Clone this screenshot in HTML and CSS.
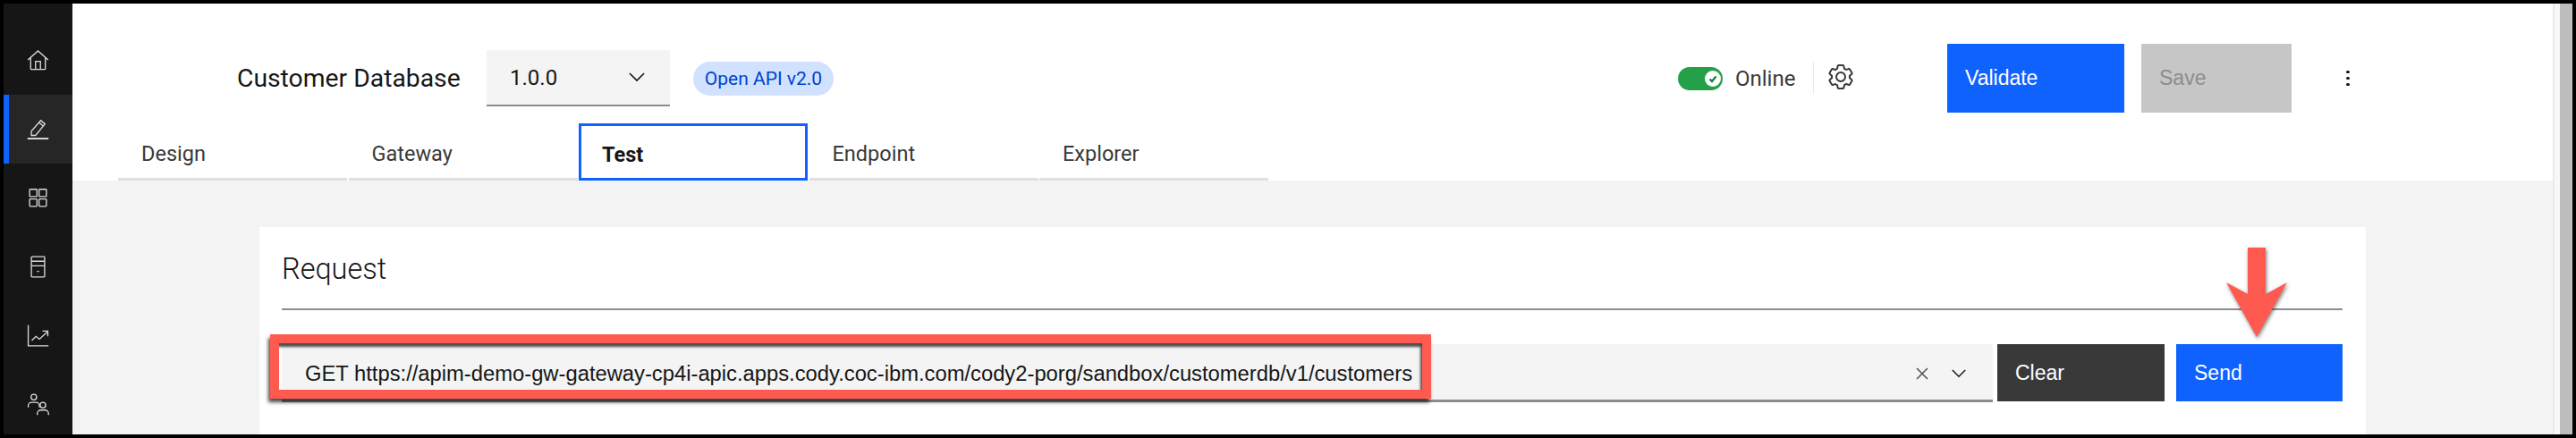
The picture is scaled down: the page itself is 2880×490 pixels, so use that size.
FILE: index.html
```html
<!DOCTYPE html>
<html lang="en">
<head>
  <meta charset="UTF-8" />
  <title>Customer Database</title>
  <link rel="stylesheet" href="styles.css">
</head>
<body>
  <div class="frame">
    <nav class="sidenav">
      <a class="nav-item">
        <svg viewBox="0 0 32 32" class="nav-icon"><path d="M1.500 15.500 16 2.500l14.500 13M5.500 12.500V28a1 1 0 0 0 1 1h19a1 1 0 0 0 1-1V12.500M12.500 29V17.500h7V29"/></svg>
      </a>
      <a class="nav-item active">
        <svg viewBox="0 0 32 32" class="nav-icon"><path d="M1 29.500h30" stroke-width="2.500"/><path d="M6.500 25v-6L20 3.500l6 5L12.500 25zM17.500 6.500l6 5"/></svg>
      </a>
      <a class="nav-item">
        <svg viewBox="0 0 32 32" class="nav-icon"><rect x="4" y="3.500" width="10.500" height="10.500" rx="1"/><rect x="17.500" y="3.500" width="10.500" height="10.500" rx="1"/><rect x="4" y="17.500" width="10.500" height="10.500" rx="1"/><rect x="17.500" y="17.500" width="10.500" height="10.500" rx="1"/></svg>
      </a>
      <a class="nav-item">
        <svg viewBox="0 0 32 32" class="nav-icon"><rect x="6.500" y="1.500" width="19" height="29" rx="1"/><path d="M6.500 8h19M6.500 14.500h19M14.500 22.500h3"/></svg>
      </a>
      <a class="nav-item">
        <svg viewBox="0 0 32 32" class="nav-icon"><path d="M2 1v29.500h29M7 23l6-6 5 4 11-10M22.500 9.500H30V17"/></svg>
      </a>
      <a class="nav-item">
        <svg viewBox="0 0 32 32" class="nav-icon"><circle cx="10" cy="5.500" r="4"/><path d="M2 20v-2a5 5 0 0 1 5-5h6a5 5 0 0 1 5 5v2"/><circle cx="23" cy="17" r="4"/><path d="M15 31v-2a5 5 0 0 1 5-5h6a5 5 0 0 1 5 5v2"/></svg>
      </a>
    </nav>

    <div class="main">
      <header class="page-header">
        <div class="top-row">
          <h1 class="api-title">Customer Database</h1>
          <div class="version-select">
            <span>1.0.0</span>
            <svg viewBox="0 0 20 12" class="chevron"><path d="M1 1l9 9 9-9"/></svg>
          </div>
          <span class="tag">Open API v2.0</span>

          <div class="status">
            <span class="toggle"><span class="knob"><svg viewBox="0 0 12 12"><path d="M2.500 6.500l2.500 2.500 4.500-5.500"/></svg></span></span>
            <span class="status-label">Online</span>
          </div>
          <span class="settings">
            <svg viewBox="0 0 32 32" class="gear">
              <path d="M27,16.760c0-.25,0-.5,0-.76s0-.51,0-.77l1.920-1.680A2,2,0,0,0,29.300,11L26.940,7a2,2,0,0,0-1.730-1,2,2,0,0,0-.64.100l-2.430.82a11.350,11.350,0,0,0-1.310-.75l-.51-2.520a2,2,0,0,0-2-1.610H13.640a2,2,0,0,0-2,1.610l-.51,2.520a11.480,11.480,0,0,0-1.320.75L7.430,6.060A2,2,0,0,0,6.790,6,2,2,0,0,0,5.060,7L2.700,11a2,2,0,0,0,.41,2.510L5,15.240c0,.25,0,.5,0,.76s0,.51,0,.77L3.110,18.450A2,2,0,0,0,2.700,21L5.060,25a2,2,0,0,0,1.730,1,2,2,0,0,0,.64-.1l2.430-.82a11.350,11.350,0,0,0,1.310.75l.51,2.520a2,2,0,0,0,2,1.610h4.720a2,2,0,0,0,2-1.610l.51-2.520a11.480,11.480,0,0,0,1.320-.75l2.420.82a2,2,0,0,0,.64.100,2,2,0,0,0,1.730-1L29.300,21a2,2,0,0,0-.41-2.510ZM25.210,24l-3.430-1.160a8.860,8.860,0,0,1-2.710,1.570L18.360,28H13.640l-.71-3.550a9.360,9.360,0,0,1-2.700-1.570L6.790,24,4.430,20l2.720-2.400a8.900,8.900,0,0,1,0-3.130L4.430,12,6.790,8l3.430,1.160a8.860,8.860,0,0,1,2.710-1.570L13.640,4h4.720l.71,3.550a9.360,9.360,0,0,1,2.700,1.570L25.210,8,27.570,12l-2.720,2.400a8.900,8.900,0,0,1,0,3.130L27.570,20Z"/>
              <path d="M16,22a6,6,0,1,1,6-6A5.940,5.940,0,0,1,16,22Zm0-10a3.910,3.910,0,0,0-4,4,3.910,3.910,0,0,0,4,4,3.910,3.910,0,0,0,4-4A3.910,3.910,0,0,0,16,12Z"/>
            </svg>
          </span>
          <button class="btn btn-primary btn-validate">Validate</button>
          <button class="btn btn-disabled btn-save">Save</button>
          <span class="overflow"><i></i><i></i><i></i></span>
        </div>

        <div class="tabs">
          <div class="tab">Design</div>
          <div class="tab">Gateway</div>
          <div class="tab selected">Test</div>
          <div class="tab">Endpoint</div>
          <div class="tab">Explorer</div>
        </div>
      </header>

      <section class="content">
        <div class="card">
          <h2 class="card-title">Request</h2>
          <div class="request-row">
            <div class="url-field">
              <span class="url-text">GET https://apim-demo-gw-gateway-cp4i-apic.apps.cody.coc-ibm.com/cody2-porg/sandbox/customerdb/v1/customers</span>
              <svg viewBox="0 0 14 14" class="clear-x"><path d="M1 1l12 12M13 1L1 13"/></svg>
              <svg viewBox="0 0 20 12" class="chevron small"><path d="M1 1l9 9 9-9"/></svg>
              <div class="highlight"></div>
            </div>
            <button class="btn btn-dark btn-clear">Clear</button>
            <button class="btn btn-primary btn-send">Send</button>
          </div>
          <svg viewBox="0 0 76 106" class="callout-arrow"><path d="M27 2h20v52l24-13-34 61L3 41l24 13z"/></svg>
        </div>
      </section>
    </div>

    <div class="scroll-strip"></div>
  </div>
</body>
</html>
```

FILE: styles.css
```css
:root {
  --blue: #0f62fe;
  --ink: #161616;
  --field: #f4f4f4;
  --red: #ff5a4f;
  --plex: "Roboto", "Liberation Sans", sans-serif;
  --helv: "Liberation Sans", Arial, sans-serif;
}

* {
  box-sizing: border-box;
}

html, body {
  margin: 0;
  padding: 0;
  background: #000;
  overflow: hidden;
}

.frame {
  display: flex;
  width: 2880px;
  height: 490px;
  padding: 4px;
  background: #000;
  font-family: var(--plex);
  color: var(--ink);
}

/* left rail */
.sidenav {
  width: 77px;
  flex: none;
  padding-top: 25px;
  background: #161616;
  overflow: hidden;
}

.nav-item {
  display: flex;
  align-items: center;
  justify-content: center;
  height: 77px;
  border-left: 6px solid transparent;
  padding-right: 6px;
}

.nav-item.active {
  background: #262626;
  border-left-color: var(--blue);
}

.nav-icon {
  width: 25px;
  height: 25px;
  fill: none;
  stroke: #dcdcdc;
  stroke-width: 1.700;
}

/* header */
.main {
  flex: 1;
  display: flex;
  flex-direction: column;
  min-width: 0;
}

.page-header {
  height: 198px;
  flex: none;
  padding-top: 45px;
  background: #fff;
}

.top-row {
  display: flex;
  align-items: center;
  height: 77px;
  padding-left: 184px;
}

.api-title {
  margin: 0;
  width: 253px;
  font-size: 28.300px;
  font-weight: 400;
  white-space: nowrap;
}

.version-select {
  display: flex;
  align-items: center;
  justify-content: space-between;
  width: 205px;
  height: 63px;
  margin-left: 26px;
  padding: 0 28px 0 26px;
  background: var(--field);
  border-bottom: 2px solid #8d8d8d;
  font-size: 24px;
}

.chevron {
  width: 18px;
  height: 11px;
  fill: none;
  stroke: var(--ink);
  stroke-width: 1.800;
}

.tag {
  display: flex;
  align-items: center;
  justify-content: center;
  width: 157px;
  height: 38px;
  margin-left: 26px;
  border-radius: 19px;
  background: #d0e2ff;
  color: #0043ce;
  font-size: 21px;
}

.status {
  display: flex;
  align-items: center;
  margin-left: auto;
}

.toggle {
  display: flex;
  align-items: center;
  justify-content: flex-end;
  width: 50px;
  height: 26px;
  padding-right: 2px;
  border-radius: 13px;
  background: #24a148;
}

.knob {
  display: flex;
  align-items: center;
  justify-content: center;
  width: 18px;
  height: 18px;
  border-radius: 50%;
  background: #fff;
}

.knob svg {
  width: 12px;
  height: 12px;
  fill: none;
  stroke: #198038;
  stroke-width: 2.400;
}

.status-label {
  margin-left: 14px;
  width: 66px;
  font-size: 24px;
  color: #393939;
}

.settings {
  display: flex;
  align-items: center;
  height: 36px;
  margin-left: 21px;
  margin-bottom: 2px;
  padding-left: 14px;
  border-left: 1px solid #e8e8e8;
}

.gear {
  width: 32px;
  height: 32px;
  fill: #393939;
  margin-bottom: 2px;
}

.btn {
  border: 0;
  border-radius: 0;
  padding: 0 20px;
  text-align: left;
  font-family: var(--helv);
  font-size: 23px;
  color: #fff;
}

.btn-primary {
  background: var(--blue);
}

.btn-dark {
  background: #393939;
}

.btn-disabled {
  background: #c6c6c6;
  color: #8d8d8d;
}

.btn-validate {
  width: 198px;
  height: 77px;
  margin-left: 103px;
}

.btn-save {
  width: 168px;
  height: 77px;
  margin-left: 19px;
}

.overflow {
  display: flex;
  flex-direction: column;
  align-items: center;
  gap: 3.500px;
  width: 4px;
  margin: 0 227px 0 61px;
}

.overflow i {
  width: 3.500px;
  height: 3.500px;
  border-radius: 50%;
  background: var(--ink);
}

/* tabs */
.tabs {
  display: flex;
  gap: 1.500px;
  height: 64px;
  margin-top: 12px;
  padding-left: 51px;
}

.tab {
  display: flex;
  align-items: center;
  width: 256px;
  padding: 6px 0 0 26px;
  border-bottom: 3px solid #e0e0e0;
  font-size: 23.500px;
  color: #393939;
}

.tab.selected {
  padding-left: 23px;
  border: 3px solid var(--blue);
  font-weight: 700;
  color: var(--ink);
}

/* request card */
.content {
  flex: 1;
  min-height: 0;
  padding: 52px 0 0 209px;
  background: #f3f3f3;
  overflow: hidden;
}

.card {
  position: relative;
  width: 2355px;
  height: 232px;
  padding: 0 26px 0 25px;
  background: #fff;
}

.card-title {
  margin: 0;
  height: 93px;
  padding-top: 29px;
  border-bottom: 2px solid #8d8d8d;
  font-size: 32.500px;
  font-weight: 300;
  line-height: 36px;
}

.request-row {
  display: flex;
  align-items: flex-start;
  height: 65px;
  margin-top: 38px;
}

.url-field {
  position: relative;
  display: flex;
  align-items: center;
  flex: 1;
  height: 65px;
  padding: 3px 30px 0 26px;
  background: var(--field);
  border-bottom: 3px solid #8d8d8d;
}

.url-text {
  flex: 1;
  font-family: var(--helv);
  font-size: 23.770px;
  white-space: nowrap;
}

.clear-x {
  width: 14px;
  height: 14px;
  margin-right: 26px;
  fill: none;
  stroke: #525252;
  stroke-width: 1.500;
}

.chevron.small {
  width: 16px;
  height: 10px;
}

/* red annotation drawn on top of the screenshot */
.highlight {
  position: absolute;
  left: -13px;
  top: -11px;
  width: 1298px;
  height: 72px;
  border: 10px solid var(--red);
  box-shadow: -2px 4px 4px rgba(0, 0, 0, 0.7), inset -2px 4px 3px rgba(0, 0, 0, 0.7);
  pointer-events: none;
}

.btn-clear {
  width: 187px;
  height: 64px;
  margin-left: 5px;
}

.btn-send {
  width: 186px;
  height: 64px;
  margin-left: 13px;
}

.callout-arrow {
  position: absolute;
  left: 2196px;
  top: 21px;
  width: 76px;
  height: 106px;
  fill: var(--red);
  filter: drop-shadow(1px 2px 2px rgba(0, 0, 0, 0.5));
}

/* browser scrollbar on the right */
.scroll-strip {
  width: 22px;
  flex: none;
  border-left: 2px solid #eaeaea;
  border-right: 14px solid #bdbdbd;
  background: #f8f8f8;
}
```
